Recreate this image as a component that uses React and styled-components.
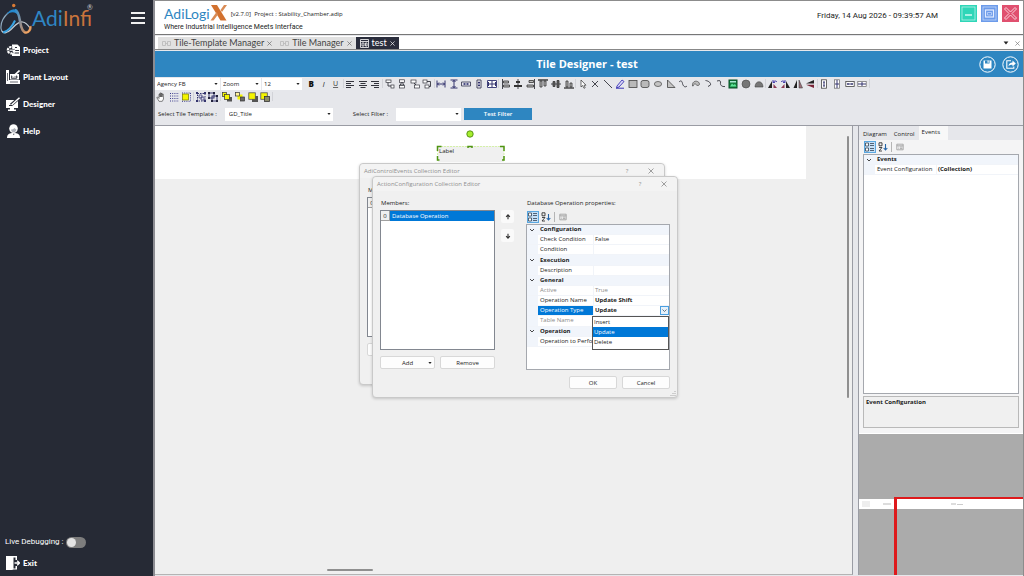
import React, { useState } from 'react';
import styled, { createGlobalStyle } from 'styled-components';

const GlobalStyle = createGlobalStyle`
  * {
    box-sizing: border-box;
  }

  body {
    margin: 0;
    background: #e6e7eb;
    color: #1c1c1c;
    font-family: 'Open Sans', 'Noto Sans', sans-serif;
    font-size: 6px;
    line-height: 10px;
  }

  button, select, input {
    font: inherit;
    color: inherit;
    margin: 0;
    padding: 0;
    border: 0;
    background: none;
  }

  h1, h2, p, ul {
    margin: 0;
    padding: 0;
    list-style: none;
    font-size: inherit;
    font-weight: inherit;
  }
`;

const Shell = styled.div`
  display: grid;
  grid-template-columns: 153px minmax(0, 1fr);
  height: 100vh;
  min-height: 440px;
`;

/* ---------- sidebar ---------- */

const Sidebar = styled.nav`
  display: flex;
  flex-direction: column;
  background: #262a35;
  color: #fff;
`;

const BrandRow = styled.div`
  display: flex;
  align-items: center;
  justify-content: space-between;
  height: 36px;
  padding-right: 8px;
`;

const Brand = styled.div`
  display: flex;
  align-items: center;
`;

const BrandText = styled.span`
  display: flex;
  align-items: flex-start;
  font-family: Lato, sans-serif;
  font-size: 21px;
  line-height: 28px;
  color: #2f86c4;

  b {
    font-weight: 400;
    color: #c9743c;
  }

  sup {
    margin-left: -5px;
    font-size: 7px;
    line-height: 7px;
    color: #c8c8c8;
  }
`;

const MenuButton = styled.button`
  display: flex;
  flex-direction: column;
  gap: 3px;
  width: 14px;
  cursor: pointer;

  span {
    height: 2px;
    width: 100%;
    background: #f0f0f0;
  }
`;

const NavList = styled.ul`
  display: flex;
  flex-direction: column;
`;

const NavLink = styled.a`
  display: flex;
  align-items: center;
  gap: 3px;
  height: 27px;
  padding-left: 6px;
  color: #fff;
  font-family: Lato, sans-serif;
  font-size: 8px;
  font-weight: 900;
  text-decoration: none;
`;

const SidebarFoot = styled.div`
  margin-top: auto;
`;

const SwitchRow = styled.label`
  display: flex;
  align-items: center;
  gap: 3px;
  padding-left: 5px;
  height: 14px;
  font-family: Roboto, sans-serif;
  font-size: 8px;
`;

const Switch = styled.input`
  appearance: none;
  width: 20px;
  height: 11px;
  border-radius: 6px;
  background: ${props => (props.checked ? '#2e86c1' : '#7d7d7d')};
  display: flex;
  align-items: center;
  justify-content: ${props => (props.checked ? 'flex-end' : 'flex-start')};

  &::before {
    content: '';
    width: 9px;
    height: 9px;
    margin: 0 1px;
    border-radius: 50%;
    background: #e3e3e3;
  }
`;

/* ---------- header, tabs, title ---------- */

const Main = styled.main`
  display: flex;
  flex-direction: column;
  min-width: 0;
  border-left: 2px solid #8c8c92;
  border-right: 1px solid #8c8c8c;
`;

const Header = styled.header`
  display: flex;
  align-items: flex-start;
  height: 35px;
  padding: 4px 4px 0 9px;
  background: #fff;
  border-top: 1px solid #8c8c8c;
  border-bottom: 1px solid #777;
`;

const ProductLine = styled.div`
  display: flex;
  align-items: center;
  height: 17px;
`;

const ProductName = styled.span`
  font-family: Lato, sans-serif;
  font-size: 14px;
  line-height: 17px;
  color: #2e86c1;
`;

const ProductInfo = styled.span`
  margin-left: 3px;
  white-space: pre;
`;

const Tagline = styled.p`
  font-family: Roboto, sans-serif;
  font-size: 7px;
`;

const Clock = styled.time`
  margin: 6px 22px 0 auto;
  font-family: Roboto, sans-serif;
  font-size: 8px;
`;

const WindowButtons = styled.div`
  display: flex;
  gap: 4px;
`;

const WindowButton = styled.button`
  display: block;
  width: 17px;
  height: 17px;
  background: ${props => props.$color};
  cursor: pointer;

  svg {
    display: block;
  }
`;

const TabStrip = styled.div`
  display: flex;
  align-items: stretch;
  height: 14px;
  margin-top: 1px;
  padding: 1px 3px 0;
  background: #fff;
  border-bottom: 1px solid #888;
`;

const DocTab = styled.div`
  display: flex;
  align-items: center;
  gap: 3px;
  padding: 0 4px;
  background: ${props => (props.$active ? '#2a2d3c' : '#e1e1e1')};
  color: ${props => (props.$active ? '#fff' : '#444')};
  font-family: Lato, sans-serif;
  font-size: 9px;
  line-height: 12px;

  button {
    display: flex;
    cursor: pointer;
  }
`;

const TabTools = styled.div`
  display: flex;
  align-items: center;
  gap: 6px;
  margin-left: auto;
  color: #555;

  button {
    display: flex;
  }
`;

const TitleBar = styled.div`
  display: grid;
  grid-template-columns: 1fr auto 1fr;
  align-items: center;
  height: 26px;
  margin-top: 1px;
  padding-right: 4px;
  background: #2e86c1;
  color: #fff;
`;

const Title = styled.h1`
  grid-column: 2;
  font-size: 11px;
  font-weight: 700;
  line-height: 16px;
`;

const TitleActions = styled.div`
  display: flex;
  justify-content: flex-end;
  gap: 6px;

  button {
    display: flex;
    cursor: pointer;
  }
`;

/* ---------- tool bars ---------- */

const ToolRow = styled.div`
  display: flex;
  align-items: center;
  height: 13px;
`;

const ComboBox = styled.div`
  display: flex;
  align-items: center;
  width: ${props => props.$width}px;
  height: ${props => props.$height || 12}px;
  margin-right: ${props => props.$after || 1}px;
  background: #fff;

  select {
    appearance: none;
    flex: 1;
    min-width: 0;
    height: 100%;
    padding-left: ${props => props.$indent || 2}px;
    outline: none;
  }

  svg {
    flex: none;
    margin: 0 2px;
    pointer-events: none;
  }
`;

const ToolGroup = styled.div`
  display: flex;
  align-items: center;
  justify-content: space-between;
  width: ${props => props.$width}px;
`;

const ToolButton = styled.button`
  display: flex;
  align-items: center;
  justify-content: center;
  width: 12px;
  height: 12px;
  cursor: pointer;

  &:hover {
    background: #cfe3f5;
  }
`;

const Separator = styled.span`
  width: 1px;
  height: 9px;
  background: #d2d3d8;
`;

const FilterRow = styled.div`
  display: flex;
  align-items: center;
  height: 23px;
  padding: 0 3px;
  border-bottom: 1px solid #9a9ca4;
`;

const FilterLabel = styled.label`
  margin-right: ${props => props.$after}px;
  white-space: nowrap;
`;

const PrimaryButton = styled.button`
  width: 68px;
  height: 12px;
  background: #2e86c1;
  color: #fff;
  font-weight: 600;
  cursor: pointer;
`;

/* ---------- work area ---------- */

const Work = styled.div`
  flex: 1;
  display: grid;
  grid-template-columns: minmax(0, 1fr) 165px;
  gap: 5px;
  min-height: 0;
  padding-bottom: 1px;
`;

const Canvas = styled.section`
  position: relative;
  display: flex;
  flex-direction: column;
  min-width: 0;
  background: #efefef;
  border-right: 1px solid #9a9ca4;
  border-bottom: 1px solid #b4b4b4;
`;

const Sheet = styled.div`
  height: 53px;
  margin-right: 46px;
  background: #fff;
`;

const Thumb = styled.div`
  position: absolute;
  background: #8f8f8f;
  border-radius: 1px;
  ${props =>
    props.$vertical
      ? 'top: 10px; right: 3px; width: 2px; height: 262px;'
      : 'left: 172px; bottom: 3px; height: 2px; width: 46px;'}
`;

const CanvasItem = styled.div`
  position: absolute;
  left: 280px;
  top: 3px;
  width: 72px;
  height: 34px;
`;

const ItemLabel = styled.div`
  position: absolute;
  left: 3px;
  top: 17px;
  width: 66px;
  height: 16px;
  padding: 0 1px;
  background: #f0f0f0;
`;

const Handles = styled.svg`
  position: absolute;
  inset: 0;
`;

/* ---------- dialogs ---------- */

const Window = styled.section`
  position: absolute;
  left: ${props => props.$x}px;
  top: ${props => props.$y}px;
  width: 306px;
  height: 222px;
  display: flex;
  flex-direction: column;
  background: #f0f0f0;
  border: 1px solid #c9c9c9;
  border-radius: 4px;
  box-shadow: 0 1px 3px rgba(0, 0, 0, 0.18);
`;

const WindowTitle = styled.div`
  display: flex;
  align-items: center;
  height: 14px;
  padding: 0 9px 0 4px;
  color: #8f8f8f;
  background: #f3f3f3;
  border-radius: 4px 4px 0 0;

  h2 {
    flex: 1;
  }

  button {
    display: flex;
    justify-content: center;
    width: 8px;
  }

  button + button {
    margin-left: 16px;
  }
`;

const WindowBody = styled.div`
  display: flex;
  padding: 7px 6px 0 7px;
`;

const Column = styled.div`
  display: flex;
  flex-direction: column;
  width: ${props => props.$width}px;
  margin-right: ${props => props.$after || 0}px;
`;

const FieldTitle = styled.span`
  height: 12px;
  padding-left: 1px;
`;

const MemberList = styled.ul`
  height: 140px;
  background: #fff;
  border: 1px solid #828790;
`;

const Member = styled.li`
  display: flex;
  height: 10px;
  line-height: 10px;

  span {
    width: 9px;
    text-align: center;
    background: #f0f0f0;
    border-right: 1px solid #a0a0a0;
    border-bottom: 1px solid #a0a0a0;
  }

  b {
    flex: 1;
    padding-left: 2px;
    font-weight: 400;
    background: #0078d7;
    color: #fff;
  }
`;

const ButtonRow = styled.div`
  display: flex;
  gap: 5px;
  margin-top: 6px;
  justify-content: ${props => (props.$end ? 'flex-end' : 'flex-start')};
`;

const PushButton = styled.button`
  position: relative;
  flex: ${props => (props.$fixed ? '0 0 48px' : '1')};
  height: 13px;
  background: #fdfdfd;
  border: 1px solid #d8d8d8;
  border-radius: 2px;
  line-height: 10px;
  cursor: pointer;

  svg {
    position: absolute;
    right: 2px;
    top: 4px;
  }
`;

const ArrowButton = styled.button`
  display: flex;
  align-items: center;
  justify-content: center;
  width: 13px;
  height: 13px;
  margin-bottom: 6px;
  background: #fafafa;
  border-radius: 2px;
`;

const Grip = styled.svg`
  position: absolute;
  right: 1px;
  bottom: 1px;
`;

/* ---------- property grid ---------- */

const GridTools = styled.div`
  display: flex;
  align-items: center;
  gap: 1px;
  height: 14px;
  padding: 0 1px;

  i {
    width: 1px;
    height: 10px;
    margin: 0 1px;
    background: #b5b5b5;
  }
`;

const GridTool = styled.button`
  display: flex;
  align-items: center;
  justify-content: center;
  width: 12px;
  height: 12px;
  background: ${props => (props.$on ? '#c5e0f7' : 'transparent')};
  border: 1px solid ${props => (props.$on ? '#5aa7e0' : 'transparent')};
`;

const GridBox = styled.div`
  position: relative;
  height: ${props => (props.$height ? `${props.$height}px` : 'auto')};
  flex: ${props => (props.$height ? 'none' : '1')};
  background: #fff;
  border: 1px solid #a5a8ae;
`;

const PropTable = styled.table`
  width: 100%;
  height: ${props => (props.$height ? `${props.$height}px` : 'auto')};
  border-spacing: 0;
  table-layout: fixed;

  th, td {
    height: 10px;
    padding: 0 0 0 2px;
    text-align: left;
    font-weight: 400;
    line-height: 9px;
    white-space: nowrap;
    overflow: hidden;
    border-bottom: 1px solid #f1f4f9;
  }

  th + td {
    padding-left: 1px;
    border-left: 1px solid #f1f4f9;
  }
`;

const Gutter = styled.td`
  && {
    width: 11px;
    padding: 0 0 0 2px;
    background: #f1f5fb;
  }

  svg {
    display: block;
  }
`;

const CategoryCell = styled.th`
  && {
    font-weight: 700;
    background: #f1f5fb;
  }
`;

const NameCell = styled.th`
  && {
    width: ${props => props.$width}px;
    background: ${props => (props.$selected ? '#0078d7' : 'transparent')};
    color: ${props => (props.$selected ? '#fff' : props.$dim ? '#8a8a8a' : 'inherit')};
  }
`;

const ValueCell = styled.td`
  && {
    font-weight: ${props => (props.$bold ? 700 : 400)};
    color: ${props => (props.$dim ? '#8a8a8a' : 'inherit')};
  }
`;

const ValuePicker = styled.div`
  display: flex;
  align-items: center;
  height: 9px;

  select {
    appearance: none;
    flex: 1;
    min-width: 0;
    font-weight: 700;
    line-height: 9px;
  }

  svg {
    flex: none;
    background: #e5f1fb;
    border: 1px solid #4a9fe0;
  }
`;

const Options = styled.ul`
  position: absolute;
  left: 65px;
  right: 0;
  top: 91px;
  height: 34px;
  background: #fff;
  border: 1px solid #555;
`;

const Option = styled.li`
  height: 10px;
  padding-left: 1px;
  line-height: 10px;
  background: ${props => (props.$active ? '#0078d7' : 'transparent')};
  color: ${props => (props.$active ? '#fff' : 'inherit')};
`;

/* ---------- right side ---------- */

const Side = styled.aside`
  display: flex;
  flex-direction: column;
  min-height: 0;
  border-left: 1px solid #9a9ca4;
`;

const SidePanel = styled.div`
  display: flex;
  flex-direction: column;
  height: 308px;
  padding: 0 4px 5px;
  background: #f4f4f5;
  border-bottom: 1px solid #fff;
`;

const SideTabs = styled.div`
  display: flex;
  height: 14px;
  margin: 0 -4px;
  padding-left: 1px;
  background: #e6e7eb;
`;

const SideTab = styled.button`
  padding: ${props => (props.$active ? '0 8px 2px 3px' : '1px 4px 0 3px')};
  background: ${props => (props.$active ? '#f8f8f8' : 'transparent')};
`;

const HelpBox = styled.div`
  height: 32px;
  margin-top: 2px;
  padding: 0 2px;
  font-weight: 700;
  background: #f0f0f0;
  border: 1px solid #b9b9b9;
`;

const Overview = styled.div`
  position: relative;
  flex: 1;
  padding-top: 65px;
  background: #ababab;
  overflow: hidden;
`;

const OverviewSheet = styled.div`
  display: flex;
  align-items: center;
  height: 10px;
  background: #fff;
`;

const OverviewFrame = styled.div`
  position: absolute;
  left: 35px;
  top: 63px;
  right: 0;
  bottom: 0;
  border-top: 2px solid #de1a1c;
  border-left: 3px solid #de1a1c;
`;

/* ---------- drawings ---------- */

const Caret = ({ size = 4 }) => (
  <svg width={size} height={size} viewBox="0 0 4 4" aria-hidden="true">
    <path d="M.4 1h3.200L2 3z" fill="#222" />
  </svg>
);

const Cross = ({ size = 6, color = '#777' }) => (
  <svg width={size} height={size} viewBox="0 0 6 6" aria-hidden="true">
    <path d="M.5.5l5 5M5.500.500l-5 5" stroke={color} strokeWidth=".8" fill="none" />
  </svg>
);

const Chevron = () => (
  <svg width="6" height="6" viewBox="0 0 6 6" aria-hidden="true">
    <path d="M1 2l2 2 2-2" stroke="#333" strokeWidth=".9" fill="none" />
  </svg>
);

const LogoMark = () => (
  <svg width="32" height="34" viewBox="0 0 32 34" aria-hidden="true">
    <defs>
      <linearGradient id="leg" x1="0" y1="0" x2="1" y2="1">
        <stop offset="0" stopColor="#2f8fd0" />
        <stop offset=".45" stopColor="#8d8f96" />
        <stop offset="1" stopColor="#e08a45" />
      </linearGradient>
    </defs>
    <path d="M8.500 11.500C3.500 16 .5 22 1 27.500c.3 3.500 3 5.200 6 3.800" stroke="#8fa9bd" strokeWidth="1.200" fill="none" />
    <path d="M2 30c1.500 3 6 1.500 9-1.500 4-4 7-8 11.500-7.500 3 .4 5.500 3 7.500 6" stroke="#c3cbd3" strokeWidth="1.200" fill="none" />
    <path d="M6 14c2-3.500 5-5.800 8-5.800 2.400 0 3.600 2.800 4.600 7C16 10.500 11 10 6 14z" fill="#2489cf" />
    <path d="M3 31.500c4.500-1 9.500-6 12-12" stroke="#38a3e2" strokeWidth="2" fill="none" />
    <path d="M15 9c3 0 4.200 6 5.200 12 .9 5.500 2.300 10.500 5.800 10.500 3 0 5-3.500 4.200-6.500" stroke="url(#leg)" strokeWidth="2.600" fill="none" />
    <path d="M24 31.500c3 1.500 6.500-1.500 6.300-5.500" stroke="#f0a868" strokeWidth="1.200" fill="none" />
    <circle cx="13.700" cy="4.500" r="1.700" fill="#d97a35" />
  </svg>
);

const XMark = () => (
  <svg width="18" height="17" viewBox="0 0 18 17" aria-hidden="true">
    <path d="M1 0h6l9.500 15.500h-6z" fill="#d2712f" />
    <path d="M14 0h3l-5 7-1.500-2zM.5 15.500h3l4.500-6-1.500-2.500z" fill="#d98b55" />
  </svg>
);

const navIcons = {
  project: (
    <>
      <path d="M6 1.500h5.500L14 4v9H6z" fill="#fff" />
      <path d="M9 4.500h2M8.500 7.500h4.500M8.500 10h4.500" stroke="#262a35" strokeWidth="1" />
      <circle cx="5" cy="7.200" r="3.600" fill="#262a35" />
      <circle cx="5" cy="7.200" r="3.200" fill="none" stroke="#fff" strokeWidth="2.200" strokeDasharray="2.400 .8" />
      <path d="M3.500 7.200h4" stroke="#fff" strokeWidth="1.200" />
    </>
  ),
  layout: (
    <>
      <path d="M0 0h3v10h11v4H0z" fill="#fff" />
      <path d="M4 4h9v5.500H4z" fill="#fff" />
      <path d="M5.500 5.500v3h5v-3M5 7h7M1.500 3v8M4 12h8" stroke="#262a35" strokeWidth=".7" fill="none" />
      <path d="M7 6.500L13.500.5" stroke="#fff" strokeWidth="1.600" />
    </>
  ),
  designer: (
    <>
      <path d="M0 3h12v8H0zM4 11h4v2H4zM2 12.500h8V14H2z" fill="#fff" />
      <path d="M5 8l8-7" stroke="#262a35" strokeWidth="3" />
      <path d="M5.500 8L13.500.8" stroke="#fff" strokeWidth="1.500" />
      <path d="M3 8.500h3" stroke="#262a35" strokeWidth="1" />
    </>
  ),
  help: (
    <>
      <circle cx="7.500" cy="4.600" r="4.300" fill="#fff" />
      <path d="M1 14c0-4 2.500-5 6.500-5s6.500 1 6.500 5z" fill="#fff" />
      <path d="M5 5.500c1.500 0 3-.6 3.600-1.500.6.8 1.200 1.200 1.800 1.300-.1 2-1.300 3-2.700 3S5.200 7.300 5 5.500z" fill="#aeb2ba" />
      <path d="M7 9.800l.8 1.500.8-1.500" fill="#262a35" />
    </>
  ),
  exit: (
    <>
      <path d="M0 0h11v4h-1.500V1.500H7.500v11h2V10H11v3.500H7.500L6 14H0z" fill="#fff" />
      <path d="M8.500 7h5M11.200 4.800L13.500 7l-2.300 2.200" stroke="#fff" strokeWidth="1.300" fill="none" />
    </>
  ),
};

const NavIcon = ({ name }) => (
  <svg width="14" height="14" viewBox="0 0 14 14" aria-hidden="true">{navIcons[name]}</svg>
);

const ink = { stroke: '#33343c', strokeWidth: 0.9, fill: 'none' };
const navy = { stroke: '#34346e', strokeWidth: 1, fill: 'none' };
const node = { fill: '#fff', stroke: '#33343c', strokeWidth: 0.7 };

const glyphs = {
  bold: <text x="2.500" y="8" fontSize="8" fontWeight="800" fill="#111">B</text>,
  italic: <text x="3.500" y="8" fontSize="8" fontStyle="italic" fill="#333">I</text>,
  underline: <text x="2" y="7" fontSize="7" textDecoration="underline" fill="#333">U</text>,
  left: <path d="M1 2.500h8M1 4.500h5M1 6.500h8M1 8.500h5" {...ink} strokeWidth="1" />,
  center: <path d="M1 2.500h8M2.500 4.500h5M1 6.500h8M2.500 8.500h5" {...ink} strokeWidth="1" />,
  right: <path d="M1 2.500h8M4 4.500h5M1 6.500h8M4 8.500h5" {...ink} strokeWidth="1" />,
  link1: <><path d="M3 3v4h4" {...ink} /><rect x="1" y="1" width="5" height="2.500" {...node} /><rect x="6" y="6" width="3" height="3" {...node} /></>,
  link2: <><path d="M5 3L3 6h4L5 3" {...ink} /><rect x="2.500" y=".8" width="5" height="2.500" {...node} /><rect x="2.500" y="6.500" width="5" height="2.500" {...node} /></>,
  link3: <><path d="M3 3l4 4" {...ink} /><rect x="1" y="1" width="5" height="3" {...node} /><rect x="4.500" y="6" width="5" height="3" {...node} /></>,
  link4: <><path d="M4 2.500h4.500v5H6" {...ink} /><rect x="1" y="1" width="4" height="3" {...node} /><rect x="3" y="6" width="4" height="3" {...node} /></>,
  spaceH: <path d="M1 1.500v7M9 1.500v7M1 5h8M3 3.500L1.500 5 3 6.500M7 3.500L8.500 5 7 6.500" {...navy} />,
  spaceV: <path d="M1.500 1h7M1.500 9h7M5 1v8M3.500 3L5 1.500 6.500 3M3.500 7L5 8.500 6.500 7" {...navy} />,
  sameW: <><path d="M.5 3h9v4h-9z" fill="#e4e4ee" stroke="#44455e" strokeWidth=".9" /><path d="M2 5h6M3.500 4v2M6.500 4v2" stroke="#44457e" strokeWidth=".9" fill="none" /></>,
  sameH: <><path d="M3 1h4v8H3z" fill="#fff" stroke="#44455e" /><path d="M5 2.500v5M4 3.500h2M4 6.500h2" {...navy} /></>,
  sameBoth: <><path d="M.5 1.500h9v7h-9z" fill="#fff" stroke="#44457e" /><path d="M5 2v6M1 5h8" {...navy} /><path d="M1.500 3v4M8.500 3v4" {...navy} /></>,
  alignL: <><path d="M1.500 0v10" {...ink} /><path d="M2.500 2h5v2h-5zM2.500 6h6v2h-6z" fill="#bbb" stroke="#333" strokeWidth=".8" /></>,
  alignC: <><path d="M5 0v10" {...ink} /><path d="M3 2h4v2H3zM1 6h8v2H1z" fill="#333" /></>,
  alignR: <><path d="M8.500 0v10" {...ink} /><path d="M3 1.500h4.500v2H3zM1 6h6.500v2H1z" fill="#bbb" stroke="#333" strokeWidth=".8" /></>,
  alignT: <><path d="M0 1h10" stroke="#222" strokeWidth="1.300" /><path d="M2 2h2v6H2zM6 2h2v5H6z" fill="#bbb" stroke="#333" strokeWidth=".8" /></>,
  alignM: <><path d="M0 5h10" {...ink} /><path d="M2 2.500h2v5H2zM6 1.500h2v7H6z" fill="#666" stroke="#333" strokeWidth=".8" /></>,
  alignB: <><path d="M0 9h10" stroke="#222" strokeWidth="1.200" /><path d="M2 2h2v6H2zM6 4h2v4H6z" fill="#bbb" stroke="#333" strokeWidth=".8" /></>,
  cursor: <path d="M3 1v7l1.600-1.500L6 9.300l1.200-.6L6 6.200h2z" fill="#fff" stroke="#333" strokeWidth=".7" />,
  cross: <path d="M2 2l6 6M8 2L2 8" {...ink} />,
  line: <path d="M1 1l8 8" {...ink} />,
  pen: <><path d="M2 7l5-6 2 1.500-5 5.500-2.500.8z" fill="#dcd8f8" stroke="#3a35b5" strokeWidth=".9" /><path d="M1 9.200h8" stroke="#3a35b5" /></>,
  rect: <rect x="1" y="1.500" width="8" height="7" fill="#b9b9b9" stroke="#444" strokeWidth=".8" />,
  round: <rect x="1" y="1.500" width="8" height="7" rx="2" fill="#b9b9b9" stroke="#444" strokeWidth=".8" />,
  ellipse: <ellipse cx="5" cy="5" rx="3.600" ry="2.500" fill="#c4c4c4" stroke="#555" strokeWidth=".8" />,
  triangle: <path d="M1.500 1v7.500H9z" fill="#c4c4c4" stroke="#444" strokeWidth=".8" />,
  curve: <path d="M1 3c2-2 3-1 3.500 1.500S7 9 9 7" {...ink} />,
  closed: <path d="M1.500 7C1 3 4 1.500 6.500 2.500S9 6.500 7 6.500 5 4.500 3.500 5 3 7.500 1.500 7z" fill="#bbb" stroke="#555" strokeWidth=".8" />,
  arc: <path d="M2.500 1.500C6 2 8 4 7.500 6L5 7.500" {...ink} />,
  bezier: <path d="M1 2c3-1 4 0 3.500 2S6 8 9 7.500" {...ink} />,
  image: <><rect x="1" y="1" width="8" height="8" fill="#15803d" stroke="#064e26" /><path d="M2 7.500l2-3 1.500 1.500L7 5l1.500 2.500z" fill="#5fe89a" /><path d="M2 2h6v1.500H2z" fill="#a9e8d3" /></>,
  disc: <circle cx="5" cy="5" r="4" fill="#777" stroke="#444" strokeWidth=".6" />,
  dome: <path d="M1 8c0-7 8-7 8 0z" fill="#777" stroke="#444" strokeWidth=".6" />,
  rotL: <><path d="M0 9l4-7v7z" fill="#222" /><path d="M5.500 9V5l3.500 4z" fill="#8c3a52" /><path d="M5 3.500c1-2 3-2 4-.5M5 1v2.500h2" stroke="#3d36a8" fill="none" strokeWidth=".9" /></>,
  rotR: <><path d="M6 9V2l4 7z" fill="#222" /><path d="M1 9l3.500-4v4z" fill="#8c3a52" /><path d="M5 3.500C4 1.500 2 1.500 1 3M5 1v2.500H3" stroke="#3d36a8" fill="none" strokeWidth=".9" /></>,
  flipH: <><path d="M.5 9L4 1v8z" fill="#222" /><path d="M6 9V1l3.500 8z" fill="#9a7079" stroke="#333" strokeWidth=".5" /></>,
  flipV: <><path d="M1 4.500L9 1v3.500z" fill="#222" /><path d="M1 5.700h8V9z" fill="#7a2436" /></>,
  distA: <><rect x="2.500" y=".8" width="5" height="8.400" fill="#fff" stroke="#444" strokeWidth=".8" /><path d="M4 3h2M4 7h2M5 3v4" {...navy} /></>,
  distB: <><rect x="2.500" y=".8" width="5" height="8.400" fill="#fff" stroke="#666" strokeWidth=".7" /><path d="M3 5h4M5 1v8" {...navy} /></>,
  distC: <><rect x=".8" y="2.500" width="8.400" height="5" fill="#fff" stroke="#444" strokeWidth=".8" /><path d="M2 5h6M3 4v2M7 4v2" {...navy} /></>,
  distD: <><rect x=".8" y="2.500" width="8.400" height="5" fill="#fff" stroke="#666" strokeWidth=".7" /><path d="M1 5h8M5 3v4" {...navy} /></>,
  hand: <path d="M3 9.300L.8 5.500l1-.4L3 6.500V2.200h1V5 1h1v4-3.600h1V5l.2-3h1l.3 5-1.200 2.300z" fill="#fff" stroke="#333" strokeWidth=".6" />,
  grid: <path d="M1 1.500h9M1 4h9M1 6.500h9M1 9h9" stroke="#3b3b8c" strokeDasharray="1 1.200" />,
  snap: <><path d="M1 1h9M1 9.300h9M9.500 1v8" stroke="#3b3b8c" strokeDasharray="1 1.200" /><rect x="1.500" y="2" width="6" height="6" fill="#f5f500" stroke="#777a00" strokeWidth=".7" /></>,
  group: <><rect x="1.500" y="1.500" width="7.500" height="7.500" {...navy} strokeDasharray="1.500 1" /><path d="M3 3h3v3H3zM5 5h3v3H5z" fill="#dcdcf0" stroke="#34346e" strokeWidth=".7" /><path d="M0 0h2v2H0zM8 0h2v2H8zM0 8h2v2H0zM8 8h2v2H8z" fill="#34346e" /></>,
  ungroup: <><rect x="1" y="1" width="5" height="5" {...navy} /><rect x="4" y="4" width="5" height="5" {...navy} /><path d="M0 0h2v2H0zM5 0h2v2H5zM0 5h2v2H0zM8 8h2v2H8zM8 3h2v2H8zM3 8h2v2H3z" fill="#22223e" /></>,
  front: <><rect x=".5" y=".5" width="4" height="4" fill="#f5f500" stroke="#333" strokeWidth=".7" /><path d="M5 5h5v4.500H5z" fill="#555" /><rect x="2.500" y="2.500" width="5" height="5" fill="#f5f500" stroke="#333" strokeWidth=".7" /></>,
  back: <><path d="M2.500 2.500h5v5h-5z" fill="#f5f500" /><rect x=".5" y=".5" width="4" height="3.500" fill="#fff39a" stroke="#333" strokeWidth=".7" /><rect x="5.500" y="5" width="4" height="4" fill="#666" stroke="#333" strokeWidth=".7" /></>,
  forward: <><path d="M4 4h6v6H4z" fill="#555" /><rect x=".8" y=".8" width="6.500" height="6.500" fill="#f5f500" stroke="#555" strokeWidth=".8" /></>,
  backward: <><rect x=".8" y=".8" width="6.500" height="6.500" fill="#f5f500" stroke="#555" strokeWidth=".8" /><rect x="4.500" y="4.500" width="5" height="5" fill="#8a8a6a" stroke="#333" strokeWidth=".8" /></>,
};

const Glyph = ({ name }) => (
  <svg width="10" height="10" viewBox="0 0 10 10" aria-hidden="true">{glyphs[name]}</svg>
);

const drawTools = [
  ['bold', 'italic', 'underline'],
  ['left', 'center', 'right'],
  ['link1', 'link2', 'link3', 'link4'],
  ['spaceH', 'spaceV', 'sameW', 'sameH', 'sameBoth'],
  ['alignL', 'alignC', 'alignR', 'alignT', 'alignM', 'alignB'],
  ['cursor', 'cross', 'line', 'pen', 'rect', 'round', 'ellipse', 'triangle', 'curve', 'closed', 'arc', 'bezier', 'image', 'disc', 'dome'],
  ['rotL', 'rotR', 'flipH', 'flipV'],
  ['distA', 'distB', 'distC', 'distD'],
];

const orderTools = [
  ['hand', 'grid', 'snap'],
  ['group', 'ungroup'],
  ['front', 'back', 'forward', 'backward'],
];

const navItems = [
  { icon: 'project', label: 'Project' },
  { icon: 'layout', label: 'Plant Layout' },
  { icon: 'designer', label: 'Designer' },
  { icon: 'help', label: 'Help' },
];

const operationRows = [
  { category: 'Configuration' },
  { name: 'Check Condition', value: 'False' },
  { name: 'Condition', value: '' },
  { category: 'Execution' },
  { name: 'Description', value: '' },
  { category: 'General' },
  { name: 'Active', value: 'True', dim: true },
  { name: 'Operation Name', value: 'Update Shift', bold: true },
  { name: 'Operation Type', options: ['Insert', 'Update', 'Delete'] },
  { name: 'Table Name', value: '', dim: true },
  { category: 'Operation' },
  { name: 'Operation to Perform', value: '' },
];

const eventRows = [
  { category: 'Events' },
  { name: 'Event Configuration', value: '(Collection)', bold: true },
];

/* ---------- components ---------- */

const Tools = ({ groups, width }) => (
  <ToolGroup $width={width}>
    {groups.map((group, i) => (
      <React.Fragment key={group[0]}>
        {i > 0 && <Separator />}
        {group.map(name => (
          <ToolButton key={name} aria-label={name}>
            <Glyph name={name} />
          </ToolButton>
        ))}
      </React.Fragment>
    ))}
    <Separator />
  </ToolGroup>
);

const Combo = ({ label, id, options, ...size }) => (
  <ComboBox {...size}>
    <select id={id} aria-label={label}>
      {options.map(option => <option key={option}>{option}</option>)}
    </select>
    <Caret />
  </ComboBox>
);

const PropertyTools = () => (
  <GridTools>
    <GridTool $on aria-label="Categorized">
      <svg width="10" height="10" viewBox="0 0 10 10">
        <path d="M.5 1h3v3h-3zM.5 6h3v3h-3z" fill="#fff" stroke="#345" strokeWidth=".8" />
        <path d="M5 1.500h4M5 3.500h4M5 6.500h4M5 8.500h4" stroke="#456" strokeWidth=".9" />
      </svg>
    </GridTool>
    <GridTool aria-label="Alphabetical">
      <svg width="10" height="10" viewBox="0 0 10 10">
        <path d="M1 .8h3v3H1zM1 5.500h3L1 9h3" fill="none" stroke="#333" strokeWidth=".9" />
        <path d="M7.500 2v6M5.700 6l1.800 2 1.800-2" stroke="#2565a8" strokeWidth="1.100" fill="none" />
      </svg>
    </GridTool>
    <i />
    <GridTool aria-label="Property Pages" disabled>
      <svg width="8" height="8" viewBox="0 0 10 10">
        <path d="M1 1.500h8v7H1zM1 3.500h8M3 5h1M5 5h3M3 7h1M5 7h3" fill="none" stroke="#999" strokeWidth="1" />
      </svg>
    </GridTool>
  </GridTools>
);

const PropertyGrid = ({ rows, nameWidth, height, tableHeight }) => {
  const [type, setType] = useState('Update');
  const picker = rows.find(row => row.options);

  return (
    <GridBox $height={height}>
      <PropTable $height={tableHeight}>
        <colgroup>
          <col style={{ width: 11 }} />
          <col style={{ width: nameWidth }} />
          <col />
        </colgroup>
        <tbody>
          {rows.map(row => (
            <tr key={row.category || row.name}>
              <Gutter>{row.category && <Chevron />}</Gutter>
              {row.category ? (
                <CategoryCell colSpan="2">{row.category}</CategoryCell>
              ) : (
                <>
                  <NameCell scope="row" $width={nameWidth} $dim={row.dim} $selected={!!row.options}>{row.name}</NameCell>
                  <ValueCell $bold={row.bold} $dim={row.dim}>
                    {row.options ? (
                      <ValuePicker>
                        <select aria-label={row.name} value={type} onChange={e => setType(e.target.value)}>
                          {row.options.map(option => <option key={option}>{option}</option>)}
                        </select>
                        <svg width="9" height="9" viewBox="0 0 7 7">
                          <path d="M1.500 2.500l2 2 2-2" stroke="#456" strokeWidth=".8" fill="none" />
                        </svg>
                      </ValuePicker>
                    ) : row.value}
                  </ValueCell>
                </>
              )}
            </tr>
          ))}
        </tbody>
      </PropTable>
      {picker && (
        <Options role="listbox" aria-label={picker.name}>
          {picker.options.map(option => (
            <Option
              key={option}
              role="option"
              aria-selected={option === type}
              $active={option === type}
              onClick={() => setType(option)}
            >
              {option}
            </Option>
          ))}
        </Options>
      )}
    </GridBox>
  );
};

const EditorWindow = ({ title, x, y, member, children }) => (
  <Window $x={x} $y={y} aria-label={title}>
    <WindowTitle>
      <h2>{title}</h2>
      <button>?</button>
      <button aria-label="Close"><Cross color="#888" /></button>
    </WindowTitle>
    <WindowBody>
      <Column $width={115} $after={6}>
        <FieldTitle>Members:</FieldTitle>
        <MemberList>
          <Member><span>0</span><b>{member}</b></Member>
        </MemberList>
        <ButtonRow>
          <PushButton>Add<Caret /></PushButton>
          <PushButton>Remove</PushButton>
        </ButtonRow>
      </Column>
      {children}
    </WindowBody>
    <Grip width="6" height="6" viewBox="0 0 6 6">
      <path d="M5 1v1M5 3v1M5 5v1M3 3v1M3 5v1M1 5v1" stroke="#aaa" strokeWidth="1" />
    </Grip>
  </Window>
);

const App = () => {
  const [debugging, setDebugging] = useState(false);

  return (
    <>
      <GlobalStyle />
      <Shell>
        <Sidebar>
          <BrandRow>
            <Brand>
              <LogoMark />
              <BrandText>Adi<b>Infi</b><sup>®</sup></BrandText>
            </Brand>
            <MenuButton aria-label="Menu"><span /><span /><span /></MenuButton>
          </BrandRow>
          <NavList>
            {navItems.map(item => (
              <li key={item.label}>
                <NavLink href="#"><NavIcon name={item.icon} />{item.label}</NavLink>
              </li>
            ))}
          </NavList>
          <SidebarFoot>
            <SwitchRow>
              Live Debugging :
              <Switch type="checkbox" checked={debugging} onChange={() => setDebugging(!debugging)} />
            </SwitchRow>
            <NavLink href="#"><NavIcon name="exit" />Exit</NavLink>
          </SidebarFoot>
        </Sidebar>

        <Main>
          <Header>
            <div>
              <ProductLine>
                <ProductName>AdiLogi</ProductName>
                <XMark />
                <ProductInfo>{'[v2.7.0]  Project : Stability_Chamber.adip'}</ProductInfo>
              </ProductLine>
              <Tagline>Where Industrial Intelligence Meets Interface</Tagline>
            </div>
            <Clock>Friday, 14 Aug 2026 - 09:39:57 AM</Clock>
            <WindowButtons>
              <WindowButton $color="#2fd6b8" aria-label="Minimize">
                <svg width="17" height="17" viewBox="0 0 17 17">
                  <rect x="2" y="2" width="13" height="13" fill="none" stroke="#b5f3e8" strokeWidth=".8" />
                  <path d="M5 10h7" stroke="#d5fbf4" strokeWidth="1.500" />
                </svg>
              </WindowButton>
              <WindowButton $color="#6c9bea" aria-label="Maximize">
                <svg width="17" height="17" viewBox="0 0 17 17">
                  <rect x="2" y="2" width="13" height="13" fill="none" stroke="#c2d7fa" strokeWidth=".8" />
                  <rect x="4.500" y="5" width="8" height="7" fill="none" stroke="#e2ecff" strokeWidth="1.200" />
                  <path d="M6.500 7.500h4v2.500h-4z" fill="none" stroke="#c2d7fa" strokeWidth=".8" />
                </svg>
              </WindowButton>
              <WindowButton $color="#e0506f" aria-label="Close">
                <svg width="17" height="17" viewBox="0 0 17 17">
                  <path d="M4 2.500l4.500 4.500L13 2.500 14.500 4 10 8.500l4.500 4.500-1.500 1.500-4.500-4.500L4 14.500 2.500 13 7 8.500 2.500 4z" fill="none" stroke="#fbd3dc" strokeWidth="1" />
                </svg>
              </WindowButton>
            </WindowButtons>
          </Header>

          <TabStrip>
            {['Tile-Template Manager', 'Tile Manager', 'test'].map((name, i) => (
              <DocTab key={name} $active={i === 2}>
                <svg width="9" height="9" viewBox="0 0 9 9">
                  {i === 2 ? (
                    <path d="M.5.5h8v8h-8zM.5 2.500h8M2 4h2v3H2zM5.500 4h1.500v3H5.500z" fill="none" stroke="#e8e8e8" strokeWidth=".9" />
                  ) : (
                    <path d="M.5 2.500h3v4h-3zM5.500 2.500h3v4h-3zM3.500 4.500h2" fill="none" stroke="#b8b8b8" strokeWidth=".8" />
                  )}
                </svg>
                {name}
                <button aria-label={`Close ${name}`}><Cross size={5} color={i === 2 ? '#fff' : '#666'} /></button>
              </DocTab>
            ))}
            <TabTools>
              <button aria-label="Open documents"><Caret size={6} /></button>
              <button aria-label="Close document"><Cross size={5} /></button>
            </TabTools>
          </TabStrip>

          <TitleBar>
            <Title>Tile Designer - test</Title>
            <TitleActions>
              <button aria-label="Save">
                <svg width="17" height="17" viewBox="0 0 17 17">
                  <circle cx="8.500" cy="8.500" r="7.700" fill="none" stroke="#fff" strokeWidth="1" />
                  <path d="M4.500 4.500h8v8h-8z" fill="#fff" />
                  <path d="M6 4.500h4.500v3H6z" fill="#2e86c1" />
                  <path d="M8.500 4.500h1.200v2.300H8.500z" fill="#fff" />
                </svg>
              </button>
              <button aria-label="Export">
                <svg width="17" height="17" viewBox="0 0 17 17">
                  <circle cx="8.500" cy="8.500" r="7.700" fill="none" stroke="#fff" strokeWidth="1" />
                  <path d="M9 4.800H4.800v7.400h7V10.500" fill="none" stroke="#fff" strokeWidth="1.100" />
                  <path d="M6.500 10.200c.2-2.500 1.700-3.700 4-3.700V4.600l3.300 3-3.300 3V8.700c-1.800 0-3 .4-4 1.500z" fill="#fff" />
                </svg>
              </button>
            </TitleActions>
          </TitleBar>

          <ToolRow>
            <Combo label="Font" options={['Agency FB']} $width={65} />
            <Combo label="Zoom" options={['Zoom']} $width={40} />
            <Combo label="Font size" options={['12']} $width={40} $after={3} />
            <Tools groups={drawTools} width={565} />
          </ToolRow>
          <ToolRow><Tools groups={orderTools} width={118} /></ToolRow>
          <FilterRow>
            <FilterLabel htmlFor="template" $after={8}>Select Tile Template :</FilterLabel>
            <Combo id="template" options={['GD_Title']} $width={108} $after={20} $height={13} $indent={4} />
            <FilterLabel htmlFor="filter" $after={8}>Select Filter :</FilterLabel>
            <Combo id="filter" options={['']} $width={65} $after={3} $height={13} />
            <PrimaryButton>Test Filter</PrimaryButton>
          </FilterRow>

          <Work>
            <Canvas>
              <Sheet />
              <CanvasItem>
                <ItemLabel>Label</ItemLabel>
                <Handles width="72" height="34" viewBox="0 0 72 34">
                  <circle cx="35" cy="5" r="3.200" fill="#a6ee2e" stroke="#4f8a10" strokeWidth=".9" />
                  <path d="M2.500 18v14M69 18v14M3 17.500h66" stroke="#c8f08a" strokeDasharray="2 1" strokeWidth=".7" />
                  <path d="M2.500 22v-4.500h4M65 17.500h4V22M33 19v-1.500h4V19M2.500 27v4h2M69 27v4h-2" stroke="#4f9412" strokeWidth="1.500" fill="none" />
                </Handles>
              </CanvasItem>
              <Thumb $vertical />
              <Thumb />

              <EditorWindow title="AdiControlEvents Collection Editor" x={204} y={37} member="" />
              <EditorWindow title="ActionConfiguration Collection Editor" x={217} y={50} member="Database Operation">
                <Column $width={13} $after={12}>
                  <FieldTitle />
                  <ArrowButton aria-label="Move up">
                    <svg width="6" height="6" viewBox="0 0 7 7"><path d="M3.500 1v5M1.300 3.300L3.500 1l2.200 2.300" stroke="#333" strokeWidth="1.300" fill="none" /></svg>
                  </ArrowButton>
                  <ArrowButton aria-label="Move down">
                    <svg width="6" height="6" viewBox="0 0 7 7"><path d="M3.500 6V1M1.300 3.700L3.500 6l2.200-2.300" stroke="#333" strokeWidth="1.300" fill="none" /></svg>
                  </ArrowButton>
                </Column>
                <Column $width={144}>
                  <FieldTitle>Database Operation properties:</FieldTitle>
                  <PropertyTools />
                  <PropertyGrid rows={operationRows} nameWidth={55} height={146} tableHeight={122} />
                  <ButtonRow $end>
                    <PushButton $fixed>OK</PushButton>
                    <PushButton $fixed>Cancel</PushButton>
                  </ButtonRow>
                </Column>
              </EditorWindow>
            </Canvas>

            <Side>
              <SidePanel>
                <SideTabs>
                  <SideTab>Diagram</SideTab>
                  <SideTab>Control</SideTab>
                  <SideTab $active>Events</SideTab>
                </SideTabs>
                <PropertyTools />
                <PropertyGrid rows={eventRows} nameWidth={61} />
                <HelpBox>Event Configuration</HelpBox>
              </SidePanel>
              <Overview>
                <OverviewSheet>
                  <svg width="164" height="10" viewBox="0 0 164 10">
                    <path d="M3 2h8v6H3z" fill="#eee" />
                    <path d="M24 5h8M92 5h5" stroke="#bbb" />
                    <path d="M98 5.500h6" stroke="#ccc" />
                  </svg>
                </OverviewSheet>
                <OverviewFrame />
              </Overview>
            </Side>
          </Work>
        </Main>
      </Shell>
    </>
  );
};

export default App;
